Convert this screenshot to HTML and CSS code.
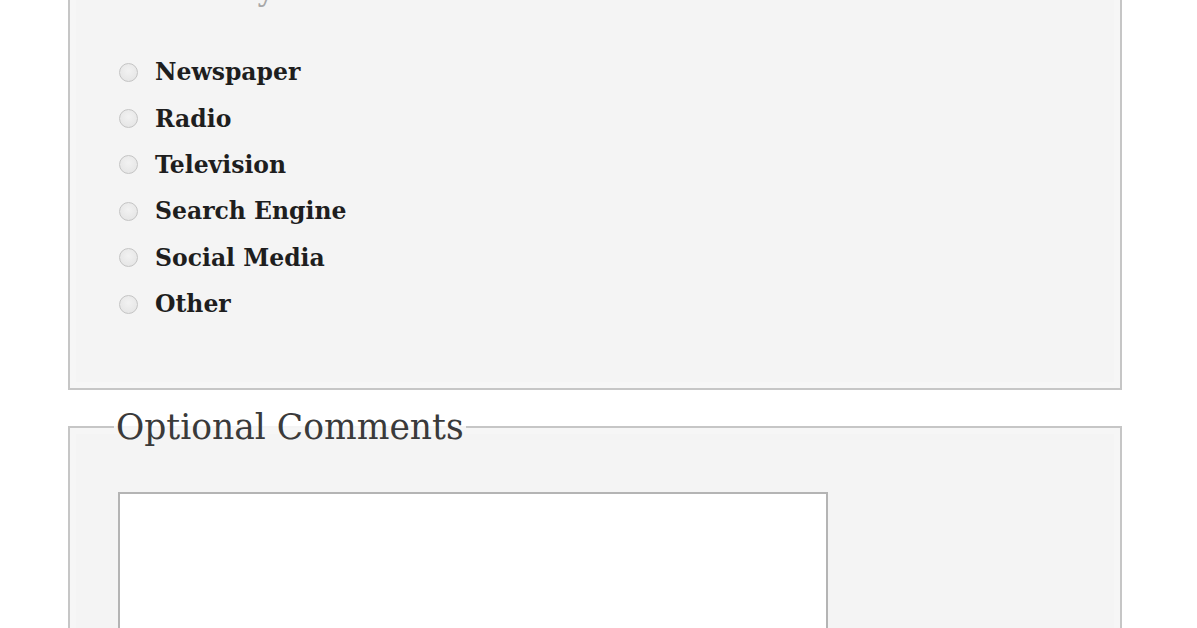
FILE: index.html
```html
<!DOCTYPE html>
<html>
<head>
<meta charset="utf-8">
<link rel="stylesheet" href="styles.css">
</head>
<body>
<form class="page">
  <fieldset class="box box-source">
    <legend class="box-title">How did you hear about us?</legend>
    <ul class="choices">
      <li class="choice"><label><input type="radio" name="src" class="radio"><span>Newspaper</span></label></li>
      <li class="choice"><label><input type="radio" name="src" class="radio"><span>Radio</span></label></li>
      <li class="choice"><label><input type="radio" name="src" class="radio"><span>Television</span></label></li>
      <li class="choice"><label><input type="radio" name="src" class="radio"><span>Search Engine</span></label></li>
      <li class="choice"><label><input type="radio" name="src" class="radio"><span>Social Media</span></label></li>
      <li class="choice"><label><input type="radio" name="src" class="radio"><span>Other</span></label></li>
    </ul>
  </fieldset>
  <fieldset class="box box-comments">
    <legend class="box-title">Optional Comments</legend>
    <textarea class="comments"></textarea>
  </fieldset>
</form>
</body>
</html>
```
FILE: styles.css
```css
html, body {
  margin: 0;
  padding: 0;
  background: #ffffff;
  overflow: hidden;
}
body {
  font-family: "DejaVu Serif", "Liberation Serif", serif;
  color: #2a2a2a;
}
.page {
  padding-left: 68px;
}
.box {
  box-sizing: border-box;
  width: 1054px;
  margin: 0;
  border: 2px solid #c6c6c6;
  background: #f4f4f4;
  box-shadow: inset 0 0 0 6px #f6f6f6;
  padding: 0 0 0 48px;
}
.box-title {
  font-size: 34.5px;
  line-height: 40px;
  padding: 0 2px;
  margin-left: -4px;
  color: #3a3a3a;
}
.box-source {
  margin-top: -31px;
  padding-top: 40px;
  padding-bottom: 61px;
}
.box-source .box-title {
  font-size: 31px;
  color: #a8a8a8;
}
.choices {
  list-style: none;
  margin: 0;
  padding: 0;
}
.choice {
  height: 46.4px;
  display: flex;
  align-items: center;
}
.choice label {
  display: flex;
  align-items: center;
  gap: 17px;
  font-weight: bold;
  font-size: 23.5px;
  color: #1e1e1e;
  margin-left: 1px;
}
.radio {
  appearance: none;
  -webkit-appearance: none;
  margin: 0;
  width: 19px;
  height: 19px;
  border-radius: 50%;
  border: 1px solid #c4c4c4;
  background: radial-gradient(circle at 50% 40%, #f2f2f2 0%, #e2e2e2 100%);
  box-sizing: border-box;
}
.box-comments {
  margin-top: 17px;
  padding-top: 45px;
  height: 260px;
}
.comments {
  display: block;
  width: 710px;
  height: 200px;
  box-sizing: border-box;
  border: 2px solid #b4b4b4;
  background: #fff;
  resize: none;
  margin: 0;
}
```
